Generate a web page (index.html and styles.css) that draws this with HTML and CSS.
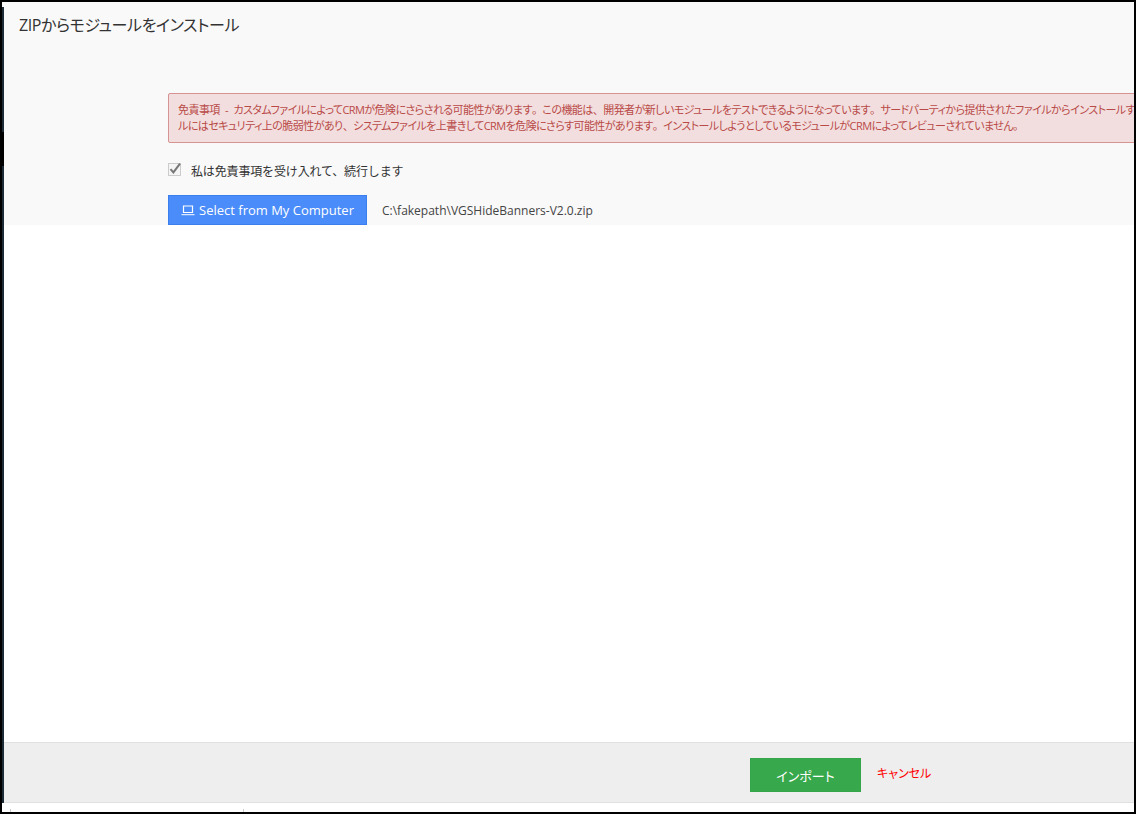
FILE: index.html
```html
<!DOCTYPE html>
<html lang="ja">
<head>
<meta charset="utf-8">
<title>ZIPからモジュールをインストール</title>
<link rel="stylesheet" href="styles.css">
</head>
<body>
<div class="frame">
  <div class="rail"></div>
  <main class="modal">
    <section class="top">
      <h1 class="title">ZIPからモジュールをインストール</h1>
      <div class="content">
        <div class="alert">免責事項 - カスタムファイルによってCRMが危険にさらされる可能性があります<span class="punct">。</span>この機能は<span class="punct">、</span>開発者が新しいモジュールをテストできるようになっています<span class="punct">。</span>サードパーティから提供されたファイルからインストールす<br>ルにはセキュリティ上の脆弱性があり<span class="punct">、</span>システムファイルを上書きしてCRMを危険にさらす可能性があります<span class="punct">。</span>インストールしようとしているモジュールがCRMによってレビューされていません<span class="punct">。</span></div>
        <label class="accept">
          <span class="box"><svg viewBox="0 0 14 14" width="14" height="14"><path d="M2.5 7.2 L5.4 10.4 L12 1.6" fill="none" stroke="#777" stroke-width="2"/></svg></span>
          <span>私は免責事項を受け入れて、続行します</span>
        </label>
        <div class="file">
          <button class="select" type="button">
            <svg viewBox="0 0 14 11" width="14" height="11"><path d="M2.5 1h9v6.5h-9z" fill="none" stroke="#fff" stroke-width="1.2"/><path d="M0.5 9.2h13v1h-13z" fill="#fff"/></svg>
            Select from My Computer
          </button>
          <span class="path">C:\fakepath\VGSHideBanners-V2.0.zip</span>
        </div>
      </div>
    </section>
    <div class="middle"></div>
    <footer class="actions">
      <button class="import" type="button">インポート</button>
      <a class="cancel" href="#">キャンセル</a>
    </footer>
    <div class="under"><i></i><i></i></div>
  </main>
  <div class="edge"></div>
</div>
</body>
</html>
```

FILE: styles.css
```css
* { box-sizing: border-box; }
html, body { margin: 0; height: 100%; overflow: hidden; }
body {
  background: #000;
  font-family: "Open Sans", "Noto Sans CJK JP", sans-serif;
  font-feature-settings: "palt";
  color: #333;
}
.frame {
  width: 1136px;
  height: 814px;
  padding: 2px 0;
  display: flex;
  background: #000;
}
.rail {
  width: 4px;
  flex: none;
  background:
    linear-gradient(#000, #000) 0 130px / 4px 34px no-repeat,
    linear-gradient(to right, #000 50%, #f9f9f9 50%) 0 0 / 4px 5px no-repeat,
    linear-gradient(to right, #000 50%, #fff 50%) 0 100% / 4px 9px no-repeat,
    linear-gradient(to right, #000 50%, #1c2b36 50%);
}
.edge { width: 2px; flex: none; background: #000; }
.modal { flex: 1; min-width: 0; display: flex; flex-direction: column; background: #fff; overflow: hidden; }
.top { height: 223px; flex: none; background: #f9f9f9; padding: 12px 0 0 15px; }
.title { margin: 0; font-size: 16px; line-height: 22px; font-weight: 400; letter-spacing: -0.4px; color: #333; }
.content { margin: 57px 0 0 149px; }
.alert {
  width: 1100px;
  height: 50px;
  padding: 8px 9px;
  background: #f2dede;
  border: 1px solid #d59392;
  border-radius: 2px;
  color: #b94a48;
  font-size: 11px;
  line-height: 16px;
  letter-spacing: -0.55px;
  word-spacing: 3px;
  white-space: nowrap;
}
.punct { font-feature-settings: normal; }
.accept { display: flex; align-items: center; margin-top: 20px; height: 16px; gap: 10px; font-size: 12px; letter-spacing: -0.15px; font-feature-settings: normal; color: #333; }
.box { width: 13px; height: 13px; border: 1px solid #ccc; background: #f5f5f5; display: block; position: relative; margin-top: -3px; }
.box svg { position: absolute; left: -1px; top: -2px; }
.file { display: flex; align-items: center; gap: 15px; margin-top: 16px; }
.select {
  width: 199px;
  height: 30px;
  padding: 0;
  display: flex;
  align-items: center;
  justify-content: center;
  gap: 4px;
  background: #4a8cfa;
  border: 1px solid #3b7fee;
  color: #fff;
  font: 400 13px "Open Sans", sans-serif;
}
.path { font-size: 12px; color: #444; }
.middle { flex: 1; background: #fff; }
.actions {
  height: 61px;
  flex: none;
  display: flex;
  align-items: center;
  padding-left: 746px;
  gap: 16px;
  background: #eee;
  border-top: 1px solid #e0e0e0;
  border-bottom: 1px solid #e0e0e0;
}
.import { width: 111px; height: 34px; margin-top: 5px; border: 1px solid #34a54a; background: #37a84c; color: #fff; font: 13px "Open Sans", "Noto Sans CJK JP", sans-serif; font-feature-settings: "palt"; }
.cancel { color: #f00; font-size: 12px; text-decoration: none; margin-top: 1px; }
.under { height: 9px; flex: none; display: flex; align-items: flex-end; background: #fff; padding-left: 6px; gap: 232px; }
.under i { width: 1px; height: 3px; background: #ccc; display: block; }
```
